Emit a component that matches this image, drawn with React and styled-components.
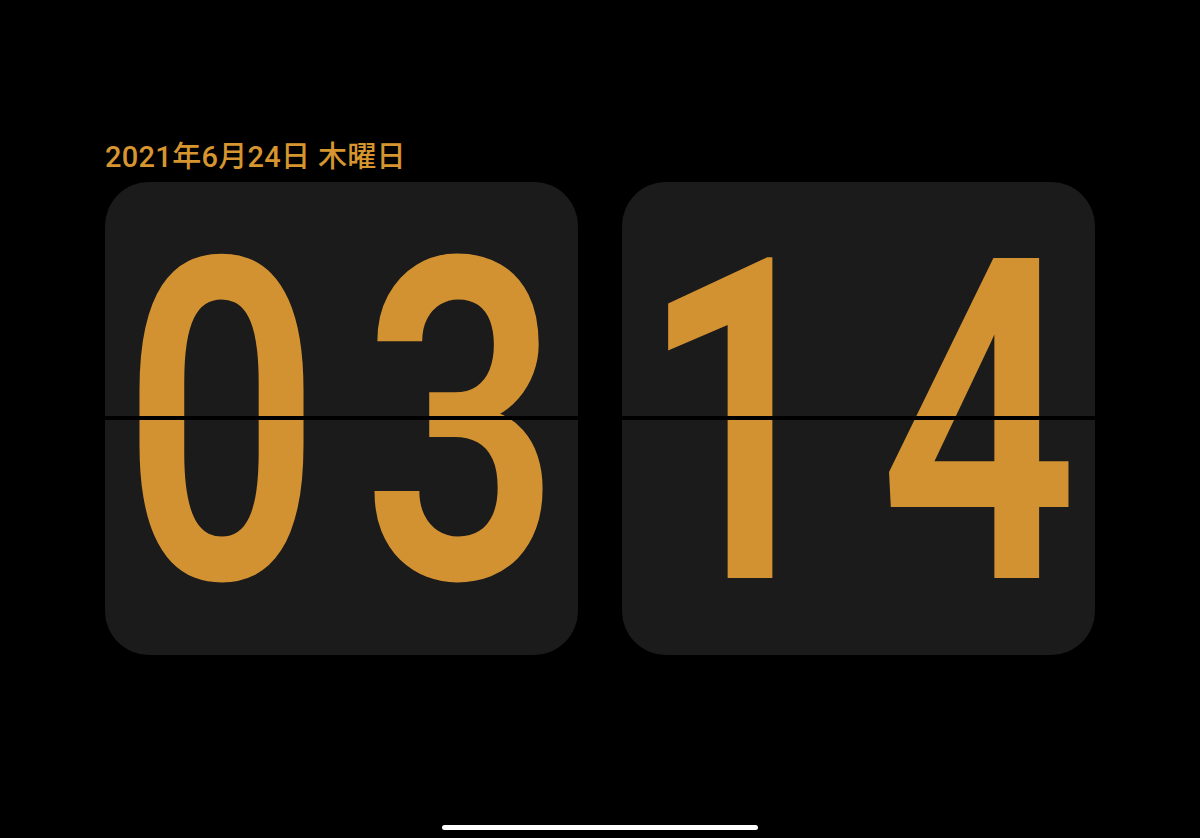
import React from 'react';
import styled, { createGlobalStyle } from 'styled-components';

const GlobalStyle = createGlobalStyle`
    html, body {
        margin:0;
        padding:0;
        background:#000;
    }
`

const Page = styled.div`
    width:1200px;
    height:838px;
    background:#000;
    display:flex;
    flex-direction:column;
    align-items:center;
    overflow:hidden;
`
const Clock = styled.div`
    margin-top:142px;
    display:flex;
    flex-direction:column;
    gap:10px;
`
const DateLabel = styled.div`
    font-family:Roboto, "Noto Sans CJK JP", sans-serif;
    font-size:29px;
    font-weight:500;
    letter-spacing:0.3px;
    line-height:30px;
    color:#d6952f;
`
const Cards = styled.div`
    display:flex;
    gap:44px;
`
const Card = styled.div`
    position:relative;
    width:473px;
    height:473px;
    border-radius:44px;
    background:#1b1b1b;
    display:flex;
    justify-content:center;
    align-items:center;
    &::after{
        content:'';
        position:absolute;
        left:0;
        right:0;
        top:234px;
        height:4px;
        background:#000;
    }
`
const DigitCell = styled.div`
    width:240px;
    display:flex;
    justify-content:center;
    padding-top:12px;
`
const Glyph = styled.span`
    display:inline-block;
    font-family:Roboto, sans-serif;
    font-weight:600;
    font-size:450px;
    line-height:1;
    color:#d39232;
    transform:scaleX(0.77);
`
const HomeBar = styled.div`
    margin-top:auto;
    margin-bottom:8px;
    width:316px;
    height:5px;
    border-radius:3px;
    background:#fff;
`

const FlipCard = ({value}) => (
    <Card>
        {value.split('').map((d, i) => (
            <DigitCell key={i}><Glyph>{d}</Glyph></DigitCell>
        ))}
    </Card>
)

const App = () => {
    return (
        <Page>
            <GlobalStyle/>
            <Clock>
                <DateLabel>2021年6月24日 木曜日</DateLabel>
                <Cards>
                    <FlipCard value="03"/>
                    <FlipCard value="14"/>
                </Cards>
            </Clock>
            <HomeBar/>
        </Page>
    )
}

export default App;
